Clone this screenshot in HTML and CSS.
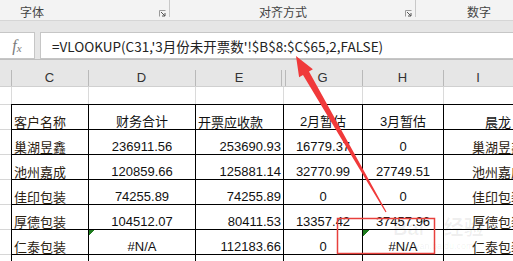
FILE: index.html
```html
<!DOCTYPE html>
<html>
<head>
<meta charset="utf-8">
<title>VLOOKUP</title>
<link rel="stylesheet" href="styles.css">
</head>
<body>
<div class="ribbon">
  <div class="group g1">
    <span class="glabel">字体</span>
    <svg class="launch" width="7" height="7" viewBox="0 0 7 7"><path d="M0.5 6.5V0.5H6.5" fill="none" stroke="#9a9a9a"/><path d="M2 2L6 6M6 3V6H3" fill="none" stroke="#555"/></svg>
  </div>
  <div class="group g2">
    <span class="glabel">对齐方式</span>
    <svg class="launch" width="7" height="7" viewBox="0 0 7 7"><path d="M0.5 6.5V0.5H6.5" fill="none" stroke="#9a9a9a"/><path d="M2 2L6 6M6 3V6H3" fill="none" stroke="#555"/></svg>
  </div>
  <div class="group g3">
    <span class="glabel">数字</span>
  </div>
</div>

<div class="fbar">
  <div class="fx"><span class="f">f</span><span class="x">x</span></div>
  <div class="formula">=VLOOKUP(C31,'3月份未开票数'!$B$8:$C$65,2,FALSE)</div>
</div>

<div class="sheet">
  <div class="hd gut"></div>
  <div class="hd">C</div>
  <div class="hd">D</div>
  <div class="hd col-e">E</div>
  <div class="hd col-g">G</div>
  <div class="hd">H</div>
  <div class="hd">I</div>

  <div class="blank gut"></div>
  <div class="blank"></div>
  <div class="blank"></div>
  <div class="blank"></div>
  <div class="blank"></div>
  <div class="blank"></div>
  <div class="blank"></div>

  <div class="cell gut"></div>
  <div class="cell name">客户名称</div>
  <div class="cell mid">财务合计</div>
  <div class="cell left">开票应收款</div>
  <div class="cell mid">2月暂估</div>
  <div class="cell mid">3月暂估</div>
  <div class="cell head-i">晨龙</div>

  <div class="cell gut"></div>
  <div class="cell name">巢湖昱鑫</div>
  <div class="cell mid">236911.56</div>
  <div class="cell right">253690.93</div>
  <div class="cell mid">16779.37</div>
  <div class="cell mid">0</div>
  <div class="cell name-i">巢湖昱鑫</div>

  <div class="cell gut"></div>
  <div class="cell name">池州嘉成</div>
  <div class="cell mid">120859.66</div>
  <div class="cell right">125881.14</div>
  <div class="cell mid">32770.99</div>
  <div class="cell mid">27749.51</div>
  <div class="cell name-i">池州嘉成</div>

  <div class="cell gut"></div>
  <div class="cell name">佳印包装</div>
  <div class="cell mid">74255.89</div>
  <div class="cell right">74255.89</div>
  <div class="cell mid">0</div>
  <div class="cell mid">0</div>
  <div class="cell name-i">佳印包装</div>

  <div class="cell gut"></div>
  <div class="cell name">厚德包装</div>
  <div class="cell mid">104512.07</div>
  <div class="cell right">80411.53</div>
  <div class="cell mid">13357.42</div>
  <div class="cell mid">37457.96</div>
  <div class="cell name-i">厚德包装</div>

  <div class="cell gut"></div>
  <div class="cell name">仁泰包装</div>
  <div class="cell mid err">#N/A</div>
  <div class="cell right">112183.66</div>
  <div class="cell mid">0</div>
  <div class="cell mid err">#N/A</div>
  <div class="cell name-i">仁泰包装</div>

  <div class="cell gut"></div>
  <div class="cell"></div>
  <div class="cell"></div>
  <div class="cell"></div>
  <div class="cell"></div>
  <div class="cell"></div>
  <div class="cell"></div>
</div>

<div class="wm">Bai <span class="wm-cn">经验</span><div class="wm-url">jingyan.baidu.com</div></div>

<svg class="marks" width="513" height="261" viewBox="0 0 513 261">
  <polygon points="296,56 312.9,69.3 309,71.6 386.5,211.7 385.5,212.3 303,75.1 299.1,77.3" fill="#f0393a"/>
  <rect x="337.5" y="218.5" width="97" height="35" fill="none" stroke="#e8403c" stroke-width="1.5"/>
</svg>
</body>
</html>
```

FILE: styles.css
```css
body {
    margin: 0;
    width: 513px;
    height: 261px;
    overflow: hidden;
    position: relative;
    background: #ffffff;
    font-family: "Noto Sans CJK SC", sans-serif;
}

/* ribbon group labels */
.ribbon {
    display: flex;
    height: 20px;
    background: #f3f3f3;
    border-bottom: 1px solid #d6d6d6;
}
.group {
    display: flex;
    height: 20px;
    box-sizing: border-box;
    font-size: 12px;
    color: #444444;
    background: linear-gradient(#c8c8c8, #c8c8c8) right top / 1px 17px no-repeat;
}
.glabel {
    line-height: 14px;
    padding-top: 5px;
}
.launch {
    margin-left: auto;
    margin-right: 4px;
    margin-top: 10px;
}
.g1 {
    width: 170px;
    padding-left: 20px;
}
.g2 {
    width: 246px;
    padding-left: 89px;
}
.g3 {
    flex: 1;
    padding-left: 51px;
    background: none;
}

/* formula bar */
.fbar {
    display: flex;
    gap: 5px;
    background: #e6e6e6;
    padding-top: 11px;
}
.fx,
.formula {
    height: 27px;
    box-sizing: border-box;
    background: #ffffff;
    border: 1px solid #c6c6c6;
    display: flex;
    align-items: center;
}
.fx {
    width: 35px;
    border-left: none;
    justify-content: center;
    font-family: "Liberation Serif", serif;
    font-style: italic;
    color: #7a7a7a;
}
.fx .f {
    font-size: 16px;
}
.fx .x {
    font-size: 11px;
    margin-top: 4px;
}
.formula {
    flex: 1;
    border-right: none;
    padding-left: 11px;
    font-size: 13.5px;
    color: #222222;
}

/* sheet grid */
.sheet {
    display: grid;
    grid-template-columns: 11px 77px 107px 88px 79px 81px 70px;
    grid-auto-rows: 25px;
    grid-template-rows: 27px 17px;
    border-top: 1px solid #bfbfbf;
    font-size: 13px;
    color: #111111;
}
.hd {
    background: #e6e6e6 linear-gradient(#b9b9b9, #b9b9b9) left bottom / 1px 16px no-repeat;
    border-bottom: 1px solid #d0d0d0;
    text-align: center;
    font-family: "Liberation Sans", sans-serif;
    font-size: 13px;
    line-height: 16px;
    padding-top: 10px;
    color: #333333;
}
.hd.gut {
    background: #e6e6e6;
}
.hd.col-e {
    background:
        linear-gradient(#b9b9b9, #b9b9b9) left bottom / 1px 16px no-repeat,
        linear-gradient(#b9b9b9, #b9b9b9) right 1px bottom / 1px 16px no-repeat,
        #e6e6e6;
}
.hd.col-g {
    background: #e6e6e6 linear-gradient(#b9b9b9, #b9b9b9) left 2px bottom / 1px 16px no-repeat;
}
.blank {
    border-left: 1px solid #dadada;
}
.blank.gut {
    border-left: none;
}
.cell {
    display: flex;
    align-items: flex-end;
    justify-content: center;
    border-top: 1px solid #000000;
    border-left: 1px solid #000000;
    line-height: 14px;
    font-family: "Liberation Sans", "Noto Sans CJK SC", sans-serif;
    white-space: nowrap;
}
.cell.gut {
    border-left: none;
    border-top: 1px solid #d6d6d6;
}
.name,
.name-i,
.head-i,
.left {
    font-family: "Noto Sans CJK SC", sans-serif;
}
.name {
    justify-content: flex-start;
    padding-left: 2px;
    color: #2b2110;
}
.name-i {
    justify-content: flex-start;
    padding-left: 28px;
    color: #2b2110;
}
.head-i {
    justify-content: flex-start;
    padding-left: 41px;
}
.left {
    justify-content: flex-start;
    padding-left: 2px;
}
.right {
    justify-content: flex-end;
    padding-right: 2px;
}
.err {
    background: linear-gradient(135deg, #1e7b1e 50%, transparent 50%) left top / 6px 6px no-repeat;
}

/* watermark and annotation layer */
.wm {
    position: absolute;
    left: 393px;
    top: 212px;
    font-family: "Liberation Sans", sans-serif;
    font-size: 20px;
    font-weight: bold;
    color: rgba(0, 0, 0, 0.06);
    white-space: nowrap;
}
.wm-cn {
    font-family: "Noto Sans CJK SC", sans-serif;
    margin-left: 14px;
}
.wm-url {
    font-size: 9px;
    font-weight: normal;
    margin-left: 8px;
}
.marks {
    position: absolute;
    left: 0;
    top: 0;
    pointer-events: none;
}
```
